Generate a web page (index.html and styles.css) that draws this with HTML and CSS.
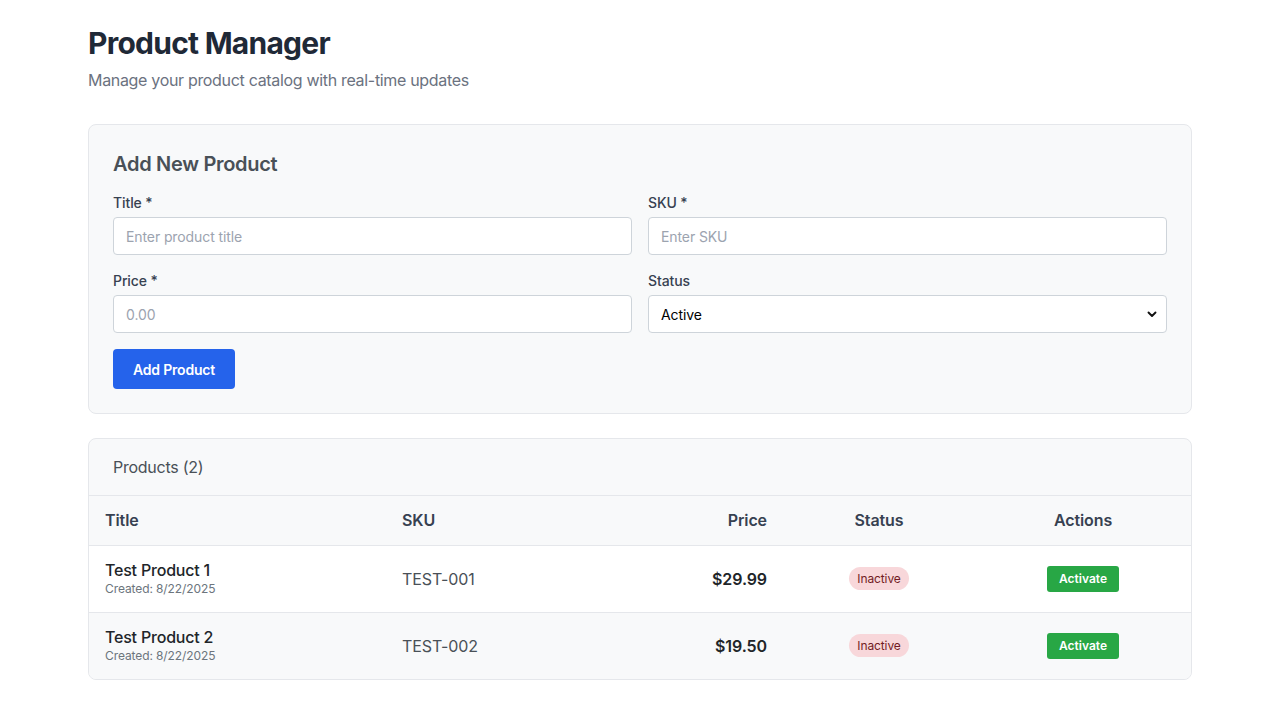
FILE: index.html
```html
<!DOCTYPE html>
<html lang="en">
<head>
<meta charset="utf-8">
<title>Product Manager</title>
<link rel="stylesheet" href="styles.css">
</head>
<body>
<main class="page">
  <header class="page-head">
    <h1 class="page-title">Product Manager</h1>
    <p class="page-sub">Manage your product catalog with real-time updates</p>
  </header>

  <section class="card form-card">
    <h2 class="card-title">Add New Product</h2>
    <div class="form-grid">
      <div class="field">
        <label class="label">Title *</label>
        <input class="input" type="text" placeholder="Enter product title">
      </div>
      <div class="field">
        <label class="label">SKU *</label>
        <input class="input" type="text" placeholder="Enter SKU">
      </div>
      <div class="field">
        <label class="label">Price *</label>
        <input class="input" type="text" placeholder="0.00">
      </div>
      <div class="field">
        <label class="label">Status</label>
        <div class="select-wrap">
          <select class="input select">
            <option>Active</option>
            <option>Inactive</option>
          </select>
          <svg class="chev" width="10" height="7" viewBox="0 0 10 7"><path d="M1.5 1.5 L5 5 L8.5 1.5" fill="none" stroke="#111" stroke-width="1.9" stroke-linecap="round" stroke-linejoin="round"/></svg>
        </div>
      </div>
    </div>
    <button class="btn-primary">Add Product</button>
  </section>

  <section class="card table-card">
    <div class="table-head">Products (2)</div>
    <table class="table">
      <colgroup>
        <col class="c-title"><col class="c-sku"><col class="c-price"><col class="c-status"><col class="c-actions">
      </colgroup>
      <thead>
        <tr>
          <th class="left">Title</th>
          <th class="left">SKU</th>
          <th class="right">Price</th>
          <th class="center">Status</th>
          <th class="center">Actions</th>
        </tr>
      </thead>
      <tbody>
        <tr>
          <td><div class="p-name">Test Product 1</div><div class="p-date">Created: 8/22/2025</div></td>
          <td class="sku">TEST-001</td>
          <td class="right price">$29.99</td>
          <td class="center"><span class="badge">Inactive</span></td>
          <td class="center"><button class="btn-activate">Activate</button></td>
        </tr>
        <tr class="alt">
          <td><div class="p-name">Test Product 2</div><div class="p-date">Created: 8/22/2025</div></td>
          <td class="sku">TEST-002</td>
          <td class="right price">$19.50</td>
          <td class="center"><span class="badge">Inactive</span></td>
          <td class="center"><button class="btn-activate">Activate</button></td>
        </tr>
      </tbody>
    </table>
  </section>
</main>
</body>
</html>
```
FILE: styles.css
```css
* { box-sizing: border-box; }
html, body { margin: 0; padding: 0; background: #fff; }
body {
  font-family: Inter, "Noto Sans", "Liberation Sans", sans-serif;
  color: #212529;
  letter-spacing: -0.1px;
}
.page {
  max-width: 1104px;
  margin: 0 auto;
  padding: 24px 0 40px;
}
.page-head { margin-bottom: 34px; }
.page-title {
  margin: 0;
  font-size: 30px;
  line-height: 38px;
  font-weight: 700;
  color: #1f2937;
  letter-spacing: -0.75px;
}
.page-sub {
  margin: 8px 0 0;
  font-size: 16px;
  line-height: 20px;
  color: #6b7280;
  letter-spacing: -0.32px;
}
.card {
  background: #f8f9fa;
  border: 1px solid #e5e7eb;
  border-radius: 8px;
}
.form-card { padding: 24px; margin-bottom: 24px; }
.card-title {
  margin: 0 0 16px;
  font-size: 20px;
  line-height: 30px;
  font-weight: 600;
  color: #495057;
  letter-spacing: -0.3px;
}
.form-grid {
  display: grid;
  grid-template-columns: 1fr 1fr;
  column-gap: 16px;
  row-gap: 18px;
  margin-bottom: 16px;
}
.field { display: flex; flex-direction: column; }
.label {
  font-size: 14px;
  line-height: 16px;
  font-weight: 500;
  color: #374151;
  margin-bottom: 6px;
}
.input {
  width: 100%;
  height: 38px;
  border: 1px solid #ced4da;
  border-radius: 4px;
  background: #fff;
  padding: 0 12px;
  font-family: inherit;
  font-size: 14px;
  color: #000;
  outline: none;
  letter-spacing: -0.1px;
}
.input::placeholder { color: #9ca3af; }
.select-wrap { position: relative; }
.select { appearance: none; -webkit-appearance: none; }
.chev { position: absolute; right: 10px; top: 16px; pointer-events: none; }
.btn-primary {
  display: block;
  height: 40px;
  padding: 0 20px;
  border: none;
  border-radius: 4px;
  background: #2563eb;
  color: #fff;
  font-family: inherit;
  font-size: 14px;
  font-weight: 600;
  letter-spacing: -0.2px;
}
.table-card { overflow: hidden; }
.table-head {
  height: 57px;
  padding: 0 24px;
  display: flex;
  align-items: center;
  font-size: 16px;
  color: #495057;
  border-bottom: 1px solid #e5e7eb;
  letter-spacing: -0.25px;
}
.table {
  width: 100%;
  border-collapse: collapse;
  table-layout: fixed;
}
.c-title { width: 297px; }
.c-sku { width: 200px; }
.c-price { width: 197px; }
.c-status { width: 192px; }
.c-actions { width: 216px; }
.table th {
  height: 49px;
  padding: 0 16px;
  font-size: 16px;
  font-weight: 600;
  color: #374151;
  background: #f8f9fa;
  border-bottom: 1px solid #e5e7eb;
}
.table td {
  height: 67px;
  padding: 0 16px;
  background: #fff;
  border-bottom: 1px solid #e5e7eb;
  vertical-align: middle;
}
.table tr.alt td { background: #f8f9fa; }
.table tbody tr:last-child td { border-bottom: none; height: 67px; }
.left { text-align: left; }
.right { text-align: right; }
.center { text-align: center; }
.p-name {
  font-size: 16px;
  line-height: 20px;
  font-weight: 500;
  color: #212529;
  letter-spacing: -0.2px;
}
.p-date {
  font-size: 12px;
  line-height: 16px;
  color: #6c757d;
  margin-top: 1px;
}
.sku { font-size: 16px; color: #495057; }
.price { font-size: 16px; font-weight: 600; color: #212529; }
.badge {
  display: inline-block;
  padding: 4px 8px;
  border-radius: 12px;
  background: #f8d7da;
  color: #721c24;
  font-size: 12px;
  line-height: 15px;
}
.btn-activate {
  height: 26px;
  padding: 0 12px;
  border: none;
  border-radius: 3px;
  background: #28a745;
  color: #fff;
  font-family: inherit;
  font-size: 12px;
  font-weight: 600;
}
```
